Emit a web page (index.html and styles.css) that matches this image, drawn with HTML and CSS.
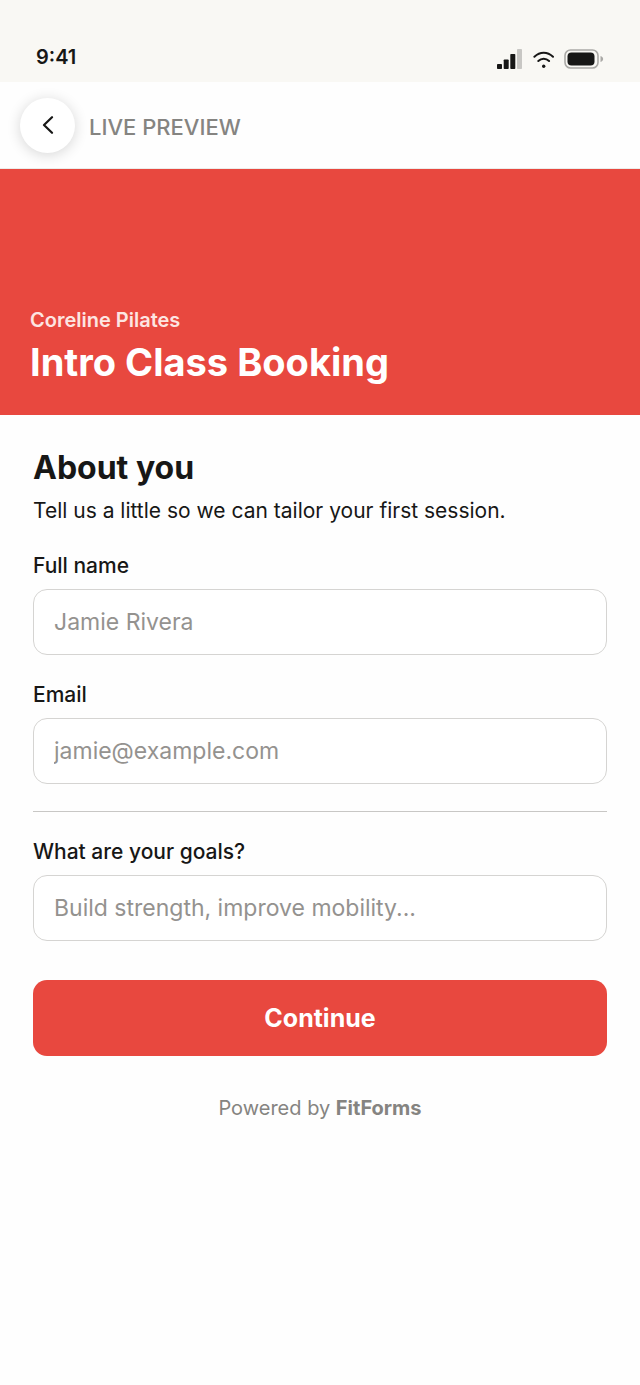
FILE: index.html
```html
<!DOCTYPE html>
<html lang="en">
<head>
    <meta charset="UTF-8">
    <meta name="viewport" content="width=device-width, initial-scale=1.0">
    <title>Intro Class Booking</title>
    <link rel="stylesheet" href="styles.css">
</head>
<body>
    <div class="status-bar">
        <span class="time">9:41</span>
        <div class="status-icons">
            <svg width="25" height="20" viewBox="0 0 25 20">
                <rect x="0" y="15" width="5" height="5" rx="0.8" fill="#171716"/>
                <rect x="6.7" y="10.5" width="5" height="9.5" rx="0.8" fill="#171716"/>
                <rect x="13.3" y="5" width="5" height="15" rx="0.8" fill="#171716"/>
                <rect x="20" y="0" width="5" height="20" rx="0.8" fill="#c8c7c4"/>
            </svg>
            <svg width="22" height="20" viewBox="0 0 22 20" fill="none" stroke="#171716" stroke-width="2" stroke-linecap="round">
                <path d="M2.4 7.8C8 2.4 15.4 2.4 21 7.8"/>
                <path d="M6.3 12C9.4 9 14 9 17.1 12"/>
                <circle cx="11.7" cy="17.2" r="1.7" fill="#171716" stroke="none"/>
            </svg>
            <svg width="40" height="20" viewBox="0 0 40 20">
                <rect x="1" y="1" width="33" height="18" rx="5.5" fill="none" stroke="#aaa9a6" stroke-width="1.6"/>
                <rect x="3.5" y="3.5" width="27" height="13" rx="4" fill="#171716"/>
                <path d="M36.5 7C40 8 40 12 36.5 13Z" fill="#aaa9a6"/>
            </svg>
        </div>
    </div>

    <header class="top-bar">
        <button class="back-button" type="button" aria-label="Back">
            <svg width="12" height="18" viewBox="0 0 12 18" fill="none" stroke="#171716" stroke-width="2.2" stroke-linecap="round" stroke-linejoin="round">
                <path d="M10 1.2L2 9L10 16.8"/>
            </svg>
        </button>
        <span class="top-title">LIVE PREVIEW</span>
    </header>

    <div class="hero">
        <p class="studio">Coreline Pilates</p>
        <h1>Intro Class Booking</h1>
    </div>

    <main class="content">
        <h2>About you</h2>
        <p class="intro">Tell us a little so we can tailor your first session.</p>

        <form class="form">
            <div class="field">
                <label for="full-name">Full name</label>
                <input type="text" id="full-name" placeholder="Jamie Rivera">
            </div>
            <div class="field">
                <label for="email">Email</label>
                <input type="email" id="email" placeholder="jamie@example.com">
            </div>
            <hr>
            <div class="field">
                <label for="goals">What are your goals?</label>
                <input type="text" id="goals" placeholder="Build strength, improve mobility...">
            </div>
            <button class="continue-button" type="button">Continue</button>
        </form>

        <p class="powered">Powered by <strong>FitForms</strong></p>
    </main>
</body>
</html>
```
FILE: styles.css
```css
* {
    box-sizing: border-box;
}

body {
    margin: 0;
    font-family: Inter, "Liberation Sans", sans-serif;
    font-size: 21px;
    line-height: 30px;
    color: #171716;
    background: #fefefe;
}

h1, h2, p {
    margin: 0;
}

.status-bar {
    display: flex;
    justify-content: space-between;
    align-items: flex-end;
    height: 82px;
    padding: 0 36px 10px;
    background: #f9f8f4;
}

.time {
    font-size: 20px;
    font-weight: 600;
}

.status-icons {
    display: flex;
    gap: 10px;
    padding-bottom: 3px;
}

.top-bar {
    display: flex;
    align-items: center;
    gap: 14px;
    height: 87px;
    padding: 0 20px;
    border-bottom: 1px solid #ececea;
}

.back-button {
    display: flex;
    align-items: center;
    justify-content: center;
    width: 55px;
    height: 55px;
    padding: 0;
    border: none;
    border-radius: 50%;
    background: #fff;
    box-shadow: 0 2px 14px rgba(0, 0, 0, 0.16);
    cursor: pointer;
}

.top-title {
    padding-top: 3px;
    font-size: 22px;
    font-weight: 500;
    color: #858481;
}

.hero {
    display: flex;
    flex-direction: column;
    justify-content: flex-end;
    gap: 3px;
    min-height: 246px;
    padding: 29px 30px;
    color: #fff;
    background: #e8483f;
}

.studio {
    font-size: 20px;
    font-weight: 600;
    color: #fde5e2;
}

h1 {
    font-size: 38px;
    line-height: 48px;
    font-weight: 700;
}

.content {
    padding: 33px;
}

h2 {
    font-size: 32px;
    line-height: 40px;
    font-weight: 700;
}

.intro {
    margin-top: 8px;
}

.form {
    display: flex;
    flex-direction: column;
    gap: 25px;
    margin-top: 25px;
}

.field {
    display: flex;
    flex-direction: column;
    gap: 8px;
}

label {
    font-weight: 500;
}

input {
    width: 100%;
    height: 66px;
    padding: 0 20px;
    border: 1px solid #d5d4d2;
    border-radius: 14px;
    font-family: inherit;
    font-size: 23px;
    color: #171716;
    background: #fff;
}

input::placeholder {
    color: #94928f;
    opacity: 1;
}

hr {
    width: 100%;
    margin: 2px 0 0;
    border: none;
    border-top: 1px solid #c8c7c5;
}

.continue-button {
    height: 76px;
    margin-top: 14px;
    border: none;
    border-radius: 14px;
    font-family: inherit;
    font-size: 25px;
    font-weight: 700;
    color: #fff;
    background: #e8483f;
    cursor: pointer;
}

.powered {
    margin-top: 37px;
    font-size: 20px;
    text-align: center;
    color: #858481;
}
```
